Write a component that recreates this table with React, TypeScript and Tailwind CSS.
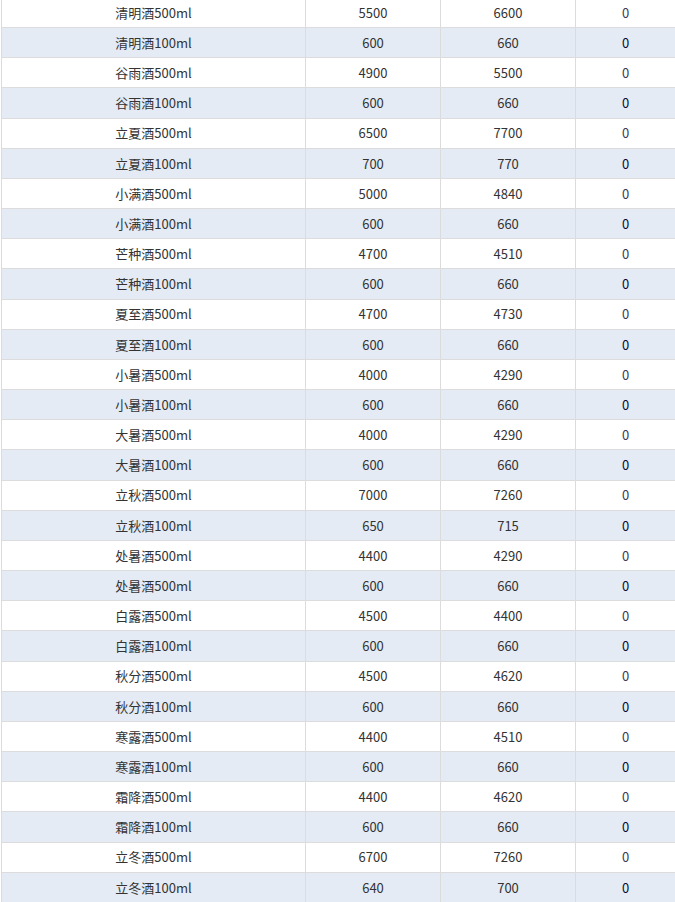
import React from "react";

const rows: [string, number, number, number][] = [
  ["清明酒500ml", 5500, 6600, 0],
  ["清明酒100ml", 600, 660, 0],
  ["谷雨酒500ml", 4900, 5500, 0],
  ["谷雨酒100ml", 600, 660, 0],
  ["立夏酒500ml", 6500, 7700, 0],
  ["立夏酒100ml", 700, 770, 0],
  ["小满酒500ml", 5000, 4840, 0],
  ["小满酒100ml", 600, 660, 0],
  ["芒种酒500ml", 4700, 4510, 0],
  ["芒种酒100ml", 600, 660, 0],
  ["夏至酒500ml", 4700, 4730, 0],
  ["夏至酒100ml", 600, 660, 0],
  ["小暑酒500ml", 4000, 4290, 0],
  ["小暑酒100ml", 600, 660, 0],
  ["大暑酒500ml", 4000, 4290, 0],
  ["大暑酒100ml", 600, 660, 0],
  ["立秋酒500ml", 7000, 7260, 0],
  ["立秋酒100ml", 650, 715, 0],
  ["处暑酒500ml", 4400, 4290, 0],
  ["处暑酒500ml", 600, 660, 0],
  ["白露酒500ml", 4500, 4400, 0],
  ["白露酒100ml", 600, 660, 0],
  ["秋分酒500ml", 4500, 4620, 0],
  ["秋分酒100ml", 600, 660, 0],
  ["寒露酒500ml", 4400, 4510, 0],
  ["寒露酒100ml", 600, 660, 0],
  ["霜降酒500ml", 4400, 4620, 0],
  ["霜降酒100ml", 600, 660, 0],
  ["立冬酒500ml", 6700, 7260, 0],
  ["立冬酒100ml", 640, 700, 0],
];

export default function App() {
  return (
    <div
      className="h-[902px] overflow-hidden bg-white text-[13px] text-[#333]"
      style={{ fontFamily: '"Noto Sans CJK SC", "Noto Sans", sans-serif' }}
    >
      {/* 表格主体，首行上边缘被裁掉一点 */}
      <div className="-mt-[2.18px] ml-px border-l border-[#dcdcdc]">
        {rows.map((r, i) => (
          <div
            key={i}
            className={
              "grid h-[30.18px] grid-cols-[304px_135px_135px_1fr] border-b border-[#dcdcdc] " +
              (i % 2 === 1 ? "bg-[#e4ebf5]" : "bg-white")
            }
          >
            <div className="flex items-center justify-center border-r border-[#dcdcdc]">{r[0]}</div>
            <div className="flex items-center justify-center border-r border-[#dcdcdc]">{r[1]}</div>
            <div className="flex items-center justify-center border-r border-[#dcdcdc]">{r[2]}</div>
            <div
              className={
                "flex items-center justify-center " +
                (i % 2 === 1 ? "text-[#0a0a33]" : "text-[#3a3a55]")
              }
            >
              {r[3]}
            </div>
          </div>
        ))}
      </div>
    </div>
  );
}
